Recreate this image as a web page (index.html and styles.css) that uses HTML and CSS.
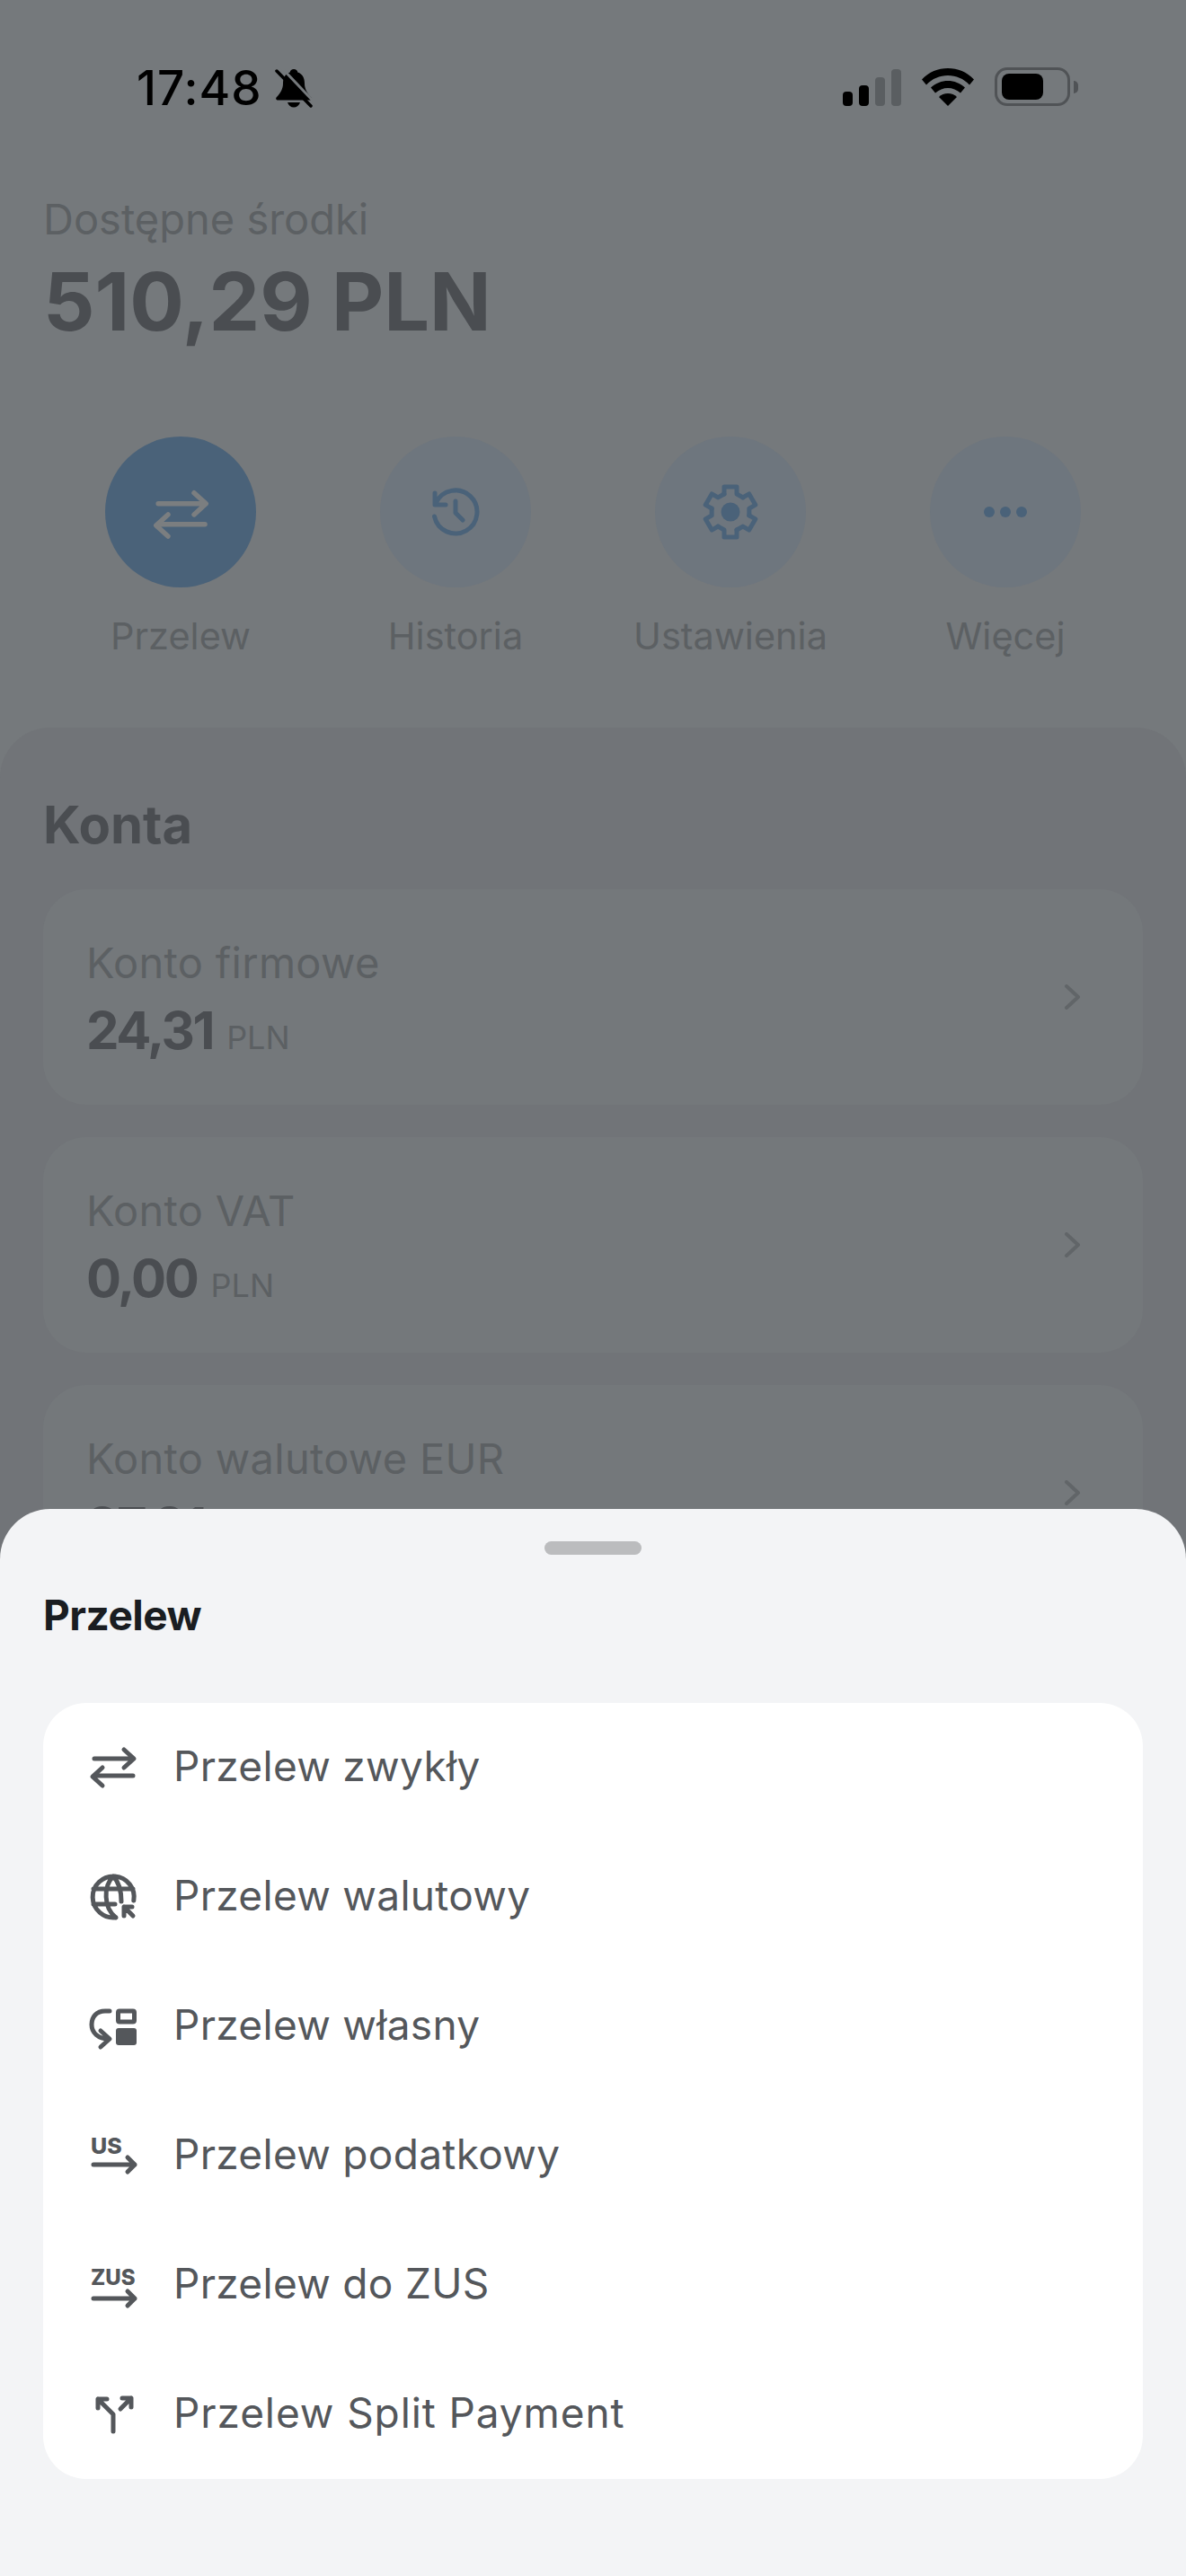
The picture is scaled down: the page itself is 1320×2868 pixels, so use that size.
FILE: index.html
```html
<!DOCTYPE html>
<html lang="pl">
<head>
    <title>Przelew</title>
    <link rel="stylesheet" href="styles.css">
</head>
<body>
    <div class="phone">
        <header class="status-bar">
            <div class="status-left">
                <span class="time">17:48</span>
                <svg class="bell" viewBox="0 0 42 44">
                    <path class="solid" d="M21 1c-2.500 0-4 1.500-4.300 3.500C11 6.500 9 11 9 17c0 6-3 11-7 15-1.500 1.500-1 3.500 1.500 3.500h35c2.500 0 3-2 1.500-3.500-4-4-7-9-7-15 0-6-2-10.500-7.700-12.500C25 2.500 23.500 1 21 1zM14 38c1 3.500 3.800 5.500 7 5.500s6-2 7-5.500z"/>
                    <path class="slash-gap" d="M3 2l36 38"/>
                    <path class="slash" d="M2 3l38 39"/>
                </svg>
            </div>
            <div class="status-right">
                <div class="signal">
                    <span class="bar bar-1"></span>
                    <span class="bar bar-2"></span>
                    <span class="bar bar-3"></span>
                    <span class="bar bar-4"></span>
                </div>
                <svg class="wifi" viewBox="0 0 58 42">
                    <path d="M29 0C18 0 8 4 0 12.500l5 6C11.500 11.500 20 8 29 8s17.500 3.500 24 10.500l5-6C50 4 40 0 29 0z"/>
                    <path d="M29 14c-7 0-13.500 2.500-19 7.500l5 6c4-3.500 9-5.500 14-5.500s10 2 14 5.500l5-6c-5.500-5-12-7.500-19-7.500z"/>
                    <path d="M29 28c-4 0-7.500 1.500-10 4l10 10 10-10c-2.500-2.500-6-4-10-4z"/>
                </svg>
                <div class="battery">
                    <div class="battery-body"><span class="battery-level"></span></div>
                    <span class="battery-nub"></span>
                </div>
            </div>
        </header>

        <section class="balance">
            <p class="balance-label">Dostępne środki</p>
            <p class="balance-value">510,29 PLN</p>
        </section>

        <nav class="actions">
            <div class="action action-active">
                <div class="action-circle">
                    <svg class="action-icon" viewBox="0 0 72 72">
                        <path d="M15 28h43M48 18l11 10-11 10M58 47H15M24 38l-11 10 11 10"/>
                    </svg>
                </div>
                <span class="action-label">Przelew</span>
            </div>
            <div class="action">
                <div class="action-circle">
                    <svg class="action-icon" viewBox="0 0 72 72">
                        <path d="M14.300 25.600A24 24 0 1 1 12.500 41M13 15v13h12M36 24v13l8 8"/>
                    </svg>
                </div>
                <span class="action-label">Historia</span>
            </div>
            <div class="action">
                <div class="action-circle">
                    <svg class="action-icon" viewBox="-36 -36 72 72">
                        <defs>
                            <polyline id="tooth" points="-7,-20 -7,-28 7,-28 7,-20 13.800,-16.100"/>
                        </defs>
                        <use href="#tooth"/>
                        <use href="#tooth" transform="rotate(60)"/>
                        <use href="#tooth" transform="rotate(120)"/>
                        <use href="#tooth" transform="rotate(180)"/>
                        <use href="#tooth" transform="rotate(240)"/>
                        <use href="#tooth" transform="rotate(300)"/>
                        <circle class="solid" cx="0" cy="0" r="10.500"/>
                    </svg>
                </div>
                <span class="action-label">Ustawienia</span>
            </div>
            <div class="action">
                <div class="action-circle">
                    <svg class="action-icon" viewBox="0 0 72 72">
                        <circle class="solid" cx="18" cy="36" r="6"/>
                        <circle class="solid" cx="36" cy="36" r="6"/>
                        <circle class="solid" cx="54" cy="36" r="6"/>
                    </svg>
                </div>
                <span class="action-label">Więcej</span>
            </div>
        </nav>

        <main class="accounts">
            <h2 class="accounts-title">Konta</h2>
            <div class="account">
                <div class="account-text">
                    <p class="account-name">Konto firmowe</p>
                    <p class="account-amount">24,31 <span class="currency">PLN</span></p>
                </div>
                <svg class="chevron" viewBox="0 0 20 28"><path d="M3 2l13 12L3 26"/></svg>
            </div>
            <div class="account">
                <div class="account-text">
                    <p class="account-name">Konto VAT</p>
                    <p class="account-amount">0,00 <span class="currency">PLN</span></p>
                </div>
                <svg class="chevron" viewBox="0 0 20 28"><path d="M3 2l13 12L3 26"/></svg>
            </div>
            <div class="account">
                <div class="account-text">
                    <p class="account-name">Konto walutowe EUR</p>
                    <p class="account-amount">27,91 <span class="currency">EUR</span></p>
                </div>
                <svg class="chevron" viewBox="0 0 20 28"><path d="M3 2l13 12L3 26"/></svg>
            </div>
        </main>

        <div class="sheet">
            <div class="sheet-handle"></div>
            <h3 class="sheet-title">Przelew</h3>
            <ul class="transfer-list">
                <li class="transfer">
                    <svg class="transfer-icon" viewBox="0 0 72 72">
                        <path d="M15 28h43M48 18l11 10-11 10M58 47H15M24 38l-11 10 11 10"/>
                    </svg>
                    <span>Przelew zwykły</span>
                </li>
                <li class="transfer">
                    <svg class="transfer-icon" viewBox="0 0 72 72">
                        <path d="M58.800 42A23 23 0 1 0 39 60.800M36 15c-11 11-11 35 3 46M36 15c6 6 9 14 9 28M14 29h44M14 46h24M48 59V49h9M48 49l10 10"/>
                    </svg>
                    <span>Przelew walutowy</span>
                </li>
                <li class="transfer">
                    <svg class="transfer-icon" viewBox="0 0 72 72">
                        <path d="M32 21h-5c-10 0-15 7-15 15 0 9 7 16 19 16M22 43l10 9-10 9"/>
                        <rect x="41.500" y="21" width="18" height="12" rx="1.500"/>
                        <rect class="solid" x="39" y="40" width="23" height="19" rx="3"/>
                    </svg>
                    <span>Przelew własny</span>
                </li>
                <li class="transfer">
                    <svg class="transfer-icon" viewBox="0 0 72 72">
                        <text class="icon-text" x="11" y="36" font-size="25">US</text>
                        <path d="M14 48h46M52 40l8 8-8 8"/>
                    </svg>
                    <span>Przelew podatkowy</span>
                </li>
                <li class="transfer">
                    <svg class="transfer-icon" viewBox="0 0 72 72">
                        <text class="icon-text" x="11" y="38" font-size="24">ZUS</text>
                        <path d="M14 53h46M52 45l8 8-8 8"/>
                    </svg>
                    <span>Przelew do ZUS</span>
                </li>
                <li class="transfer transfer-wide">
                    <svg class="transfer-icon" viewBox="0 0 72 72">
                        <path d="M36 57V38L19 21M19 31V21h10M44 32l12-12M46 20h10v10"/>
                    </svg>
                    <span>Przelew Split Payment</span>
                </li>
            </ul>
        </div>
    </div>
</body>
</html>
```

FILE: styles.css
```css
* {
    box-sizing: border-box;
}

body {
    margin: 0;
    font-family: Inter, "Liberation Sans", sans-serif;
    background-color: #75797c;
}

p, h2, h3, ul {
    margin: 0;
    padding: 0;
}

.phone {
    position: relative;
    height: 2868px;
    overflow: hidden;
    background-color: #75797c;
}

/* status bar */
.status-bar {
    display: flex;
    justify-content: space-between;
    align-items: center;
    height: 195px;
    padding: 0 120px 0 152px;
    color: #000;
}

.status-left {
    display: flex;
    align-items: center;
    gap: 14px;
}

.time {
    font-size: 53px;
    font-weight: 500;
    line-height: 64px;
    letter-spacing: 1px;
}

.bell {
    width: 42px;
    height: 44px;
}

.bell .solid {
    fill: #000;
}

.bell .slash-gap {
    stroke: #75797c;
    stroke-width: 3;
    transform: translate(4px, -3px);
}

.bell .slash {
    stroke: #000;
    stroke-width: 3.500;
    stroke-linecap: round;
}

.status-right {
    display: flex;
    align-items: flex-end;
    gap: 23px;
    margin-bottom: 2px;
}

.signal {
    display: flex;
    align-items: flex-end;
    gap: 7px;
}

.bar {
    width: 11px;
    border-radius: 4px;
    background-color: #000;
}

.bar-1 { height: 16px; }
.bar-2 { height: 23px; }
.bar-3 { height: 32px; background-color: #5a5e61; }
.bar-4 { height: 41px; background-color: #5a5e61; }

.wifi {
    width: 58px;
    height: 42px;
}

.battery {
    display: flex;
    align-items: center;
    gap: 4px;
}

.battery-body {
    width: 84px;
    height: 43px;
    padding: 4px 5px;
    border: 3px solid #505356;
    border-radius: 14px;
}

.battery-level {
    display: block;
    width: 46px;
    height: 29px;
    border-radius: 8px;
    background-color: #000;
}

.battery-nub {
    width: 5px;
    height: 14px;
    border-radius: 0 5px 5px 0;
    background-color: #505356;
}

/* balance */
.balance {
    padding: 21px 48px 0;
}

.balance-label {
    font-size: 47px;
    line-height: 56px;
    color: #5c6063;
}

.balance-value {
    margin-top: 14px;
    font-size: 90px;
    font-weight: 700;
    line-height: 100px;
    color: #4a4d51;
}

/* actions */
.actions {
    display: grid;
    grid-template-columns: repeat(4, 306px);
    padding: 0 48px;
    margin-top: 100px;
}

.action {
    display: flex;
    flex-direction: column;
    align-items: center;
}

.action-circle {
    display: flex;
    align-items: center;
    justify-content: center;
    width: 168px;
    height: 168px;
    border-radius: 50%;
    background-color: #6e767e;
}

.action-active .action-circle {
    background-color: #4a6279;
}

.action-icon {
    width: 72px;
    height: 72px;
    fill: none;
    stroke: #4a6279;
    stroke-width: 5;
    stroke-linecap: round;
    stroke-linejoin: round;
}

.action-icon .solid {
    fill: #4a6279;
    stroke: none;
}

.action-active .action-icon {
    width: 87px;
    height: 87px;
    stroke: #7b7e80;
    stroke-width: 4.500;
}

.action-label {
    margin-top: 29px;
    font-size: 41.500px;
    line-height: 50px;
    color: #5c6063;
}

/* accounts */
.accounts {
    margin-top: 77px;
    padding: 72px 48px 0;
    border-radius: 56px 56px 0 0;
    background-color: #717478;
}

.accounts-title {
    font-size: 58px;
    font-weight: 700;
    line-height: 72px;
    color: #4a4d51;
    margin-bottom: 36px;
}

.account {
    display: flex;
    justify-content: space-between;
    align-items: center;
    height: 240px;
    padding: 0 68px 0 48px;
    margin-bottom: 36px;
    border-radius: 48px;
    background-color: #74787b;
}

.account-text {
    padding-top: 14px;
}

.account-name {
    font-size: 47px;
    line-height: 56px;
    letter-spacing: 0.3px;
    color: #5c6063;
}

.account-amount {
    margin-top: 12px;
    font-size: 58px;
    font-weight: 700;
    line-height: 70px;
    letter-spacing: -2.500px;
    color: #4a4d51;
}

.currency {
    margin-left: 4px;
    font-size: 36px;
    font-weight: 400;
    letter-spacing: 0;
    color: #5c6063;
}

.chevron {
    width: 20px;
    height: 28px;
    fill: none;
    stroke: #616568;
    stroke-width: 4;
    stroke-linecap: round;
    stroke-linejoin: round;
}

/* bottom sheet */
.sheet {
    position: absolute;
    left: 0;
    right: 0;
    top: 1680px;
    bottom: 0;
    padding: 36px 48px 0;
    border-radius: 56px 56px 0 0;
    background-color: #f3f4f6;
}

.sheet-handle {
    width: 108px;
    height: 15px;
    margin: 0 auto;
    border-radius: 8px;
    background-color: #bbbcbe;
}

.sheet-title {
    margin-top: 39px;
    margin-bottom: 70px;
    font-size: 46px;
    font-weight: 700;
    line-height: 56px;
    letter-spacing: -0.5px;
    color: #1a1d21;
}

.transfer-list {
    list-style: none;
    border-radius: 48px;
    background-color: #fff;
}

.transfer {
    display: flex;
    align-items: center;
    gap: 31px;
    height: 144px;
    padding: 0 0 4px 42px;
    font-size: 46px;
    letter-spacing: 0.3px;
    color: #54575b;
}

.transfer-wide {
    letter-spacing: 0.9px;
}

.transfer-icon {
    flex-shrink: 0;
    width: 72px;
    height: 72px;
    fill: none;
    stroke: #54575b;
    stroke-width: 5;
    stroke-linecap: round;
    stroke-linejoin: round;
}

.transfer-icon .solid {
    fill: #54575b;
    stroke: none;
}

.icon-text {
    fill: #54575b;
    stroke: none;
    font-weight: 800;
    letter-spacing: 0;
}
```
